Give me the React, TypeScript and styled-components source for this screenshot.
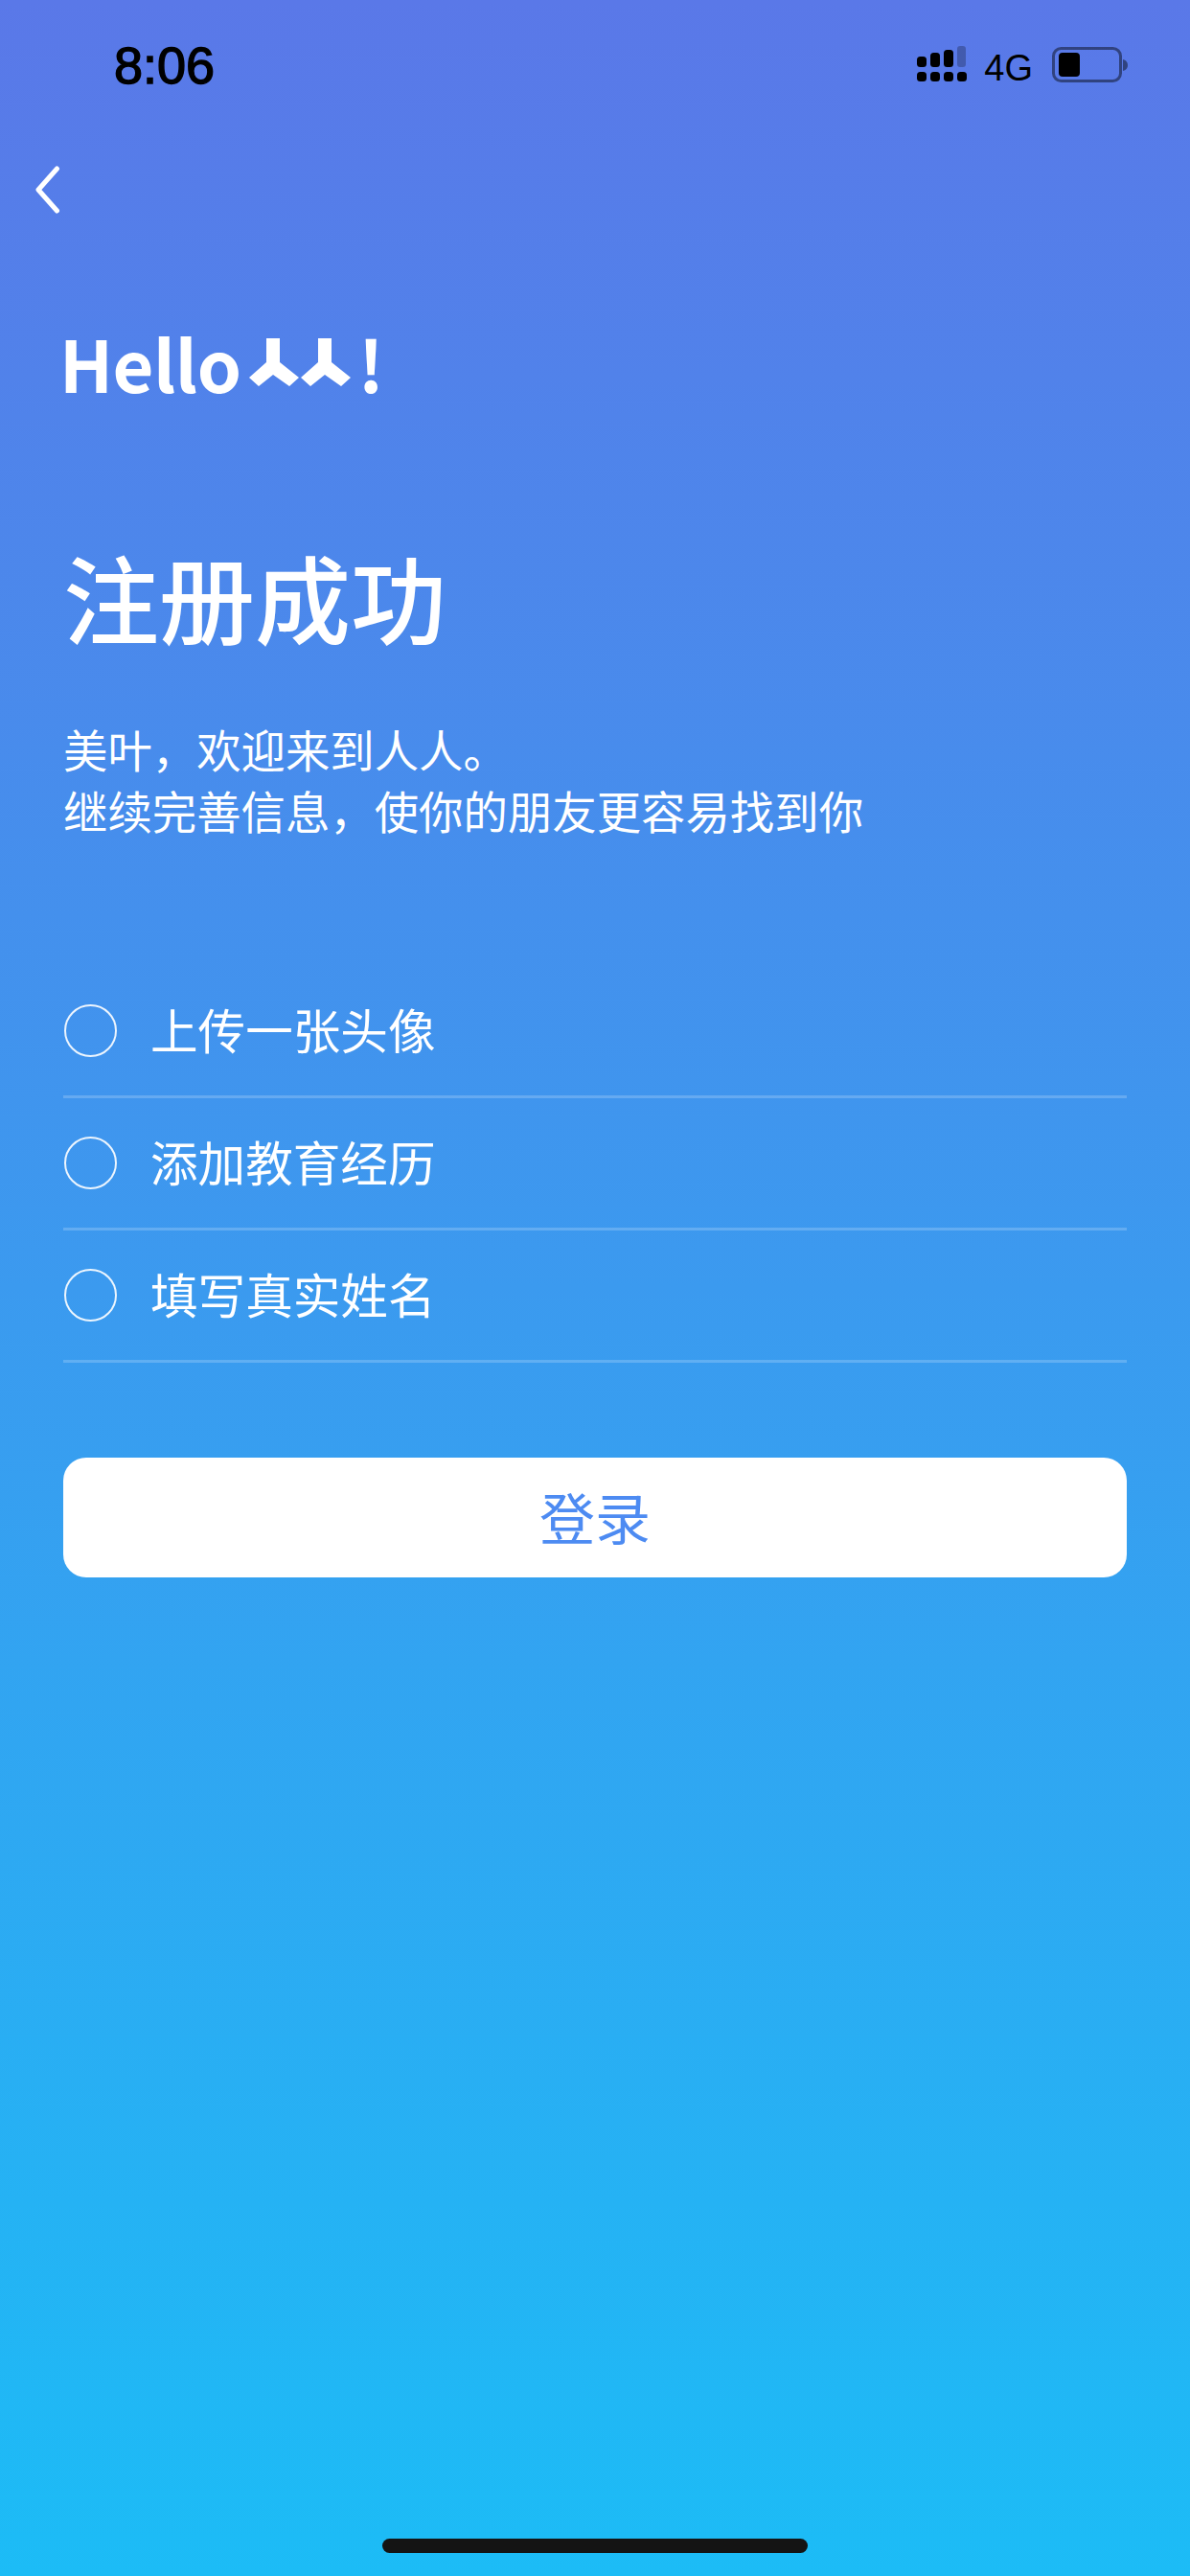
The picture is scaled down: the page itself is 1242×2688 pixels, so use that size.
import React from "react";
import styled, { createGlobalStyle } from "styled-components";

const Global = createGlobalStyle`
  html, body { margin: 0; padding: 0; }
  body { font-family: "Noto Sans CJK SC", "Noto Sans", sans-serif; }
`;

const Screen = styled.div`
  position: relative;
  width: 1242px;
  height: 2688px;
  overflow: hidden;
  background: linear-gradient(180deg, #5a78e8 0%, #1cbcf6 100%);
  color: #fff;
  padding: 0 66px;
  box-sizing: border-box;
`;

const StatusBar = styled.div`
  height: 136px;
  margin: 0 -66px;
  padding: 40px 64px 0 119px;
  box-sizing: border-box;
  display: flex;
  align-items: flex-start;
  justify-content: space-between;
  color: #000;
  font-family: "Liberation Sans", Arial, sans-serif;
`;

const Time = styled.div`
  font-size: 54px;
  line-height: 56px;
  -webkit-text-stroke: 1.4px #000;
`;

const StatusRight = styled.div`
  display: flex;
  align-items: center;
  height: 46px;
  margin-top: 5px;
`;

const Network = styled.span`
  font-size: 38px;
  line-height: 46px;
  margin: 6px 20px 0 18px;
`;

const SignalSvg = styled.svg`
  margin-top: -2px;
`;

const BackButton = styled.div`
  height: 60px;
  margin: 37px 0 0 -32px;
`;

const LogoRow = styled.div`
  display: flex;
  align-items: center;
  height: 80px;
  margin: 105px 0 0 -4px;
  font-weight: 700;
  font-size: 74px;
  line-height: 80px;
  letter-spacing: -0.5px;
`;

const MarkSvg = styled.svg`
  margin: 0 7px 0 9px;
`;

const Title = styled.h1`
  margin: 144px 0 0 0;
  font-size: 100px;
  line-height: 120px;
  font-weight: 500;
`;

const Intro = styled.p`
  margin: 67px 0 0;
  font-size: 46.4px;
  line-height: 64px;
  font-weight: 400;
`;

const List = styled.div`
  margin-top: 131px;
`;

const Row = styled.div`
  display: flex;
  align-items: center;
  height: 135px;
  border-bottom: 3px solid rgba(255, 255, 255, 0.2);
  font-size: 49.6px;
  font-weight: 400;
`;

const Circle = styled.span`
  width: 55px;
  height: 55px;
  border: 2px solid rgba(255, 255, 255, 0.9);
  border-radius: 50%;
  box-sizing: border-box;
  margin: 0 35px 0 1px;
  flex: none;
`;

const RowLabel = styled.span`
  margin-bottom: 6px;
`;

const LoginButton = styled.div`
  margin-top: 99px;
  width: 1110px;
  height: 125px;
  border-radius: 24px;
  background: #fff;
  color: #4d8bf2;
  font-size: 58px;
  font-weight: 400;
  display: flex;
  align-items: center;
  justify-content: center;
`;

const LoginLabel = styled.span`
  margin-bottom: 4px;
`;

const HomeIndicator = styled.div`
  position: absolute;
  left: 399px;
  top: 2649px;
  width: 444px;
  height: 15px;
  border-radius: 8px;
  background: #141414;
`;

const SignalIcon = () => (
  <SignalSvg width="52" height="38" viewBox="0 0 52 38">
    <rect x="0" y="11" width="10" height="11" rx="3.5" fill="#000" />
    <rect x="14" y="7" width="10" height="15" rx="3.5" fill="#000" />
    <rect x="28" y="4" width="10" height="18" rx="3.5" fill="#000" />
    <rect x="42" y="0" width="9" height="22" rx="3" fill="#000" opacity="0.25" />
    <rect x="0" y="27" width="10" height="10" rx="3.5" fill="#000" />
    <rect x="14" y="27" width="10" height="10" rx="3.5" fill="#000" />
    <rect x="28" y="27" width="10" height="10" rx="3.5" fill="#000" />
    <rect x="42" y="27" width="10" height="10" rx="3.5" fill="#000" />
  </SignalSvg>
);

const BatteryIcon = () => (
  <svg width="80" height="38" viewBox="0 0 80 38">
    <rect x="1.5" y="1.5" width="70" height="34" rx="8" fill="none" stroke="#000" strokeOpacity="0.45" strokeWidth="3" />
    <rect x="7" y="6" width="22" height="25" rx="4" fill="#000" />
    <path d="M74 13 C78 14 79 17 79 19 C79 21 78 24 74 25 Z" fill="#000" fillOpacity="0.45" />
  </svg>
);

const BackIcon = () => (
  <svg width="30" height="50" viewBox="0 0 30 50">
    <path d="M25.5 3 L6 25 L25.5 47" fill="none" stroke="#fff" strokeWidth="5" strokeLinecap="round" strokeLinejoin="round" />
  </svg>
);

const RenrenMark = () => (
  <MarkSvg width="106" height="50" viewBox="0 0 106 50">
    <path d="M18 0 H32 V25 L52 41 L42 50 L25 38 L10 50 L0 41 L18 25 Z" fill="#fff" />
    <path d="M72 0 H86 V25 L106 41 L96 50 L79 38 L64 50 L54 41 L72 25 Z" fill="#fff" />
  </MarkSvg>
);

const items = ["上传一张头像", "添加教育经历", "填写真实姓名"];

export default function App() {
  return (
    <Screen>
      <Global />
      <StatusBar>
        <Time>8:06</Time>
        <StatusRight>
          <SignalIcon />
          <Network>4G</Network>
          <BatteryIcon />
        </StatusRight>
      </StatusBar>
      <BackButton><BackIcon /></BackButton>
      <LogoRow>
        Hello
        <RenrenMark />
        !
      </LogoRow>
      <Title>注册成功</Title>
      <Intro>
        美叶，欢迎来到人人。
        <br />
        继续完善信息，使你的朋友更容易找到你
      </Intro>
      <List>
        {items.map((t) => (
          <Row key={t}>
            <Circle />
            <RowLabel>{t}</RowLabel>
          </Row>
        ))}
      </List>
      <LoginButton><LoginLabel>登录</LoginLabel></LoginButton>
      <HomeIndicator />
    </Screen>
  );
}
